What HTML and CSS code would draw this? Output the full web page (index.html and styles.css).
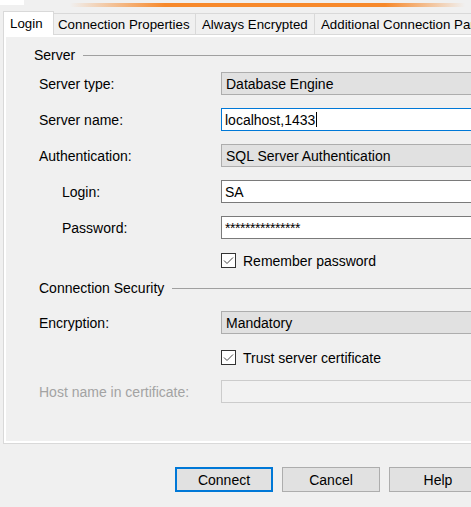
FILE: index.html
```html
<!DOCTYPE html>
<html>
<head>
<meta charset="utf-8">
<link rel="stylesheet" href="styles.css">
</head>
<body>
<div class="topbar"></div>
<div class="tabs">
  <div class="tab tab-login">Login</div>
  <div class="tab tab-cp">Connection Properties</div>
  <div class="tab tab-ae">Always Encrypted</div>
  <div class="tab tab-acp">Additional Connection Parameters</div>
</div>
<div class="panel">
  <div class="group-head group-server"><span>Server</span><span class="rule"></span></div>
  <div class="row row-first"><span class="lbl">Server type:</span><div class="field combo">Database Engine</div></div>
  <div class="row"><span class="lbl">Server name:</span><div class="field text focused">localhost,1433<span class="caret"></span></div></div>
  <div class="row"><span class="lbl">Authentication:</span><div class="field combo">SQL Server Authentication</div></div>
  <div class="row"><span class="lbl sub">Login:</span><div class="field text">SA</div></div>
  <div class="row"><span class="lbl sub">Password:</span><div class="field text stars">***************</div></div>
  <div class="row check-row row-remember">
    <svg class="cb" width="15" height="15" viewBox="0 0 15 15"><rect x="0.5" y="0.5" width="14" height="14" fill="#fff" stroke="#333"/><path d="M3 7.5 L6 10.5 L12 4.5" fill="none" stroke="#444" stroke-width="1"/></svg>
    <span>Remember password</span>
  </div>
  <div class="group-head group-sec"><span>Connection Security</span><span class="rule"></span></div>
  <div class="row row-enc"><span class="lbl">Encryption:</span><div class="field combo">Mandatory</div></div>
  <div class="row check-row row-trust">
    <svg class="cb" width="15" height="15" viewBox="0 0 15 15"><rect x="0.5" y="0.5" width="14" height="14" fill="#fff" stroke="#333"/><path d="M3 7.5 L6 10.5 L12 4.5" fill="none" stroke="#444" stroke-width="1"/></svg>
    <span>Trust server certificate</span>
  </div>
  <div class="row row-host"><span class="lbl disabled-lbl">Host name in certificate:</span><div class="field disabled"></div></div>
</div>
<div class="buttons">
  <div class="btn btn-default">Connect</div>
  <div class="btn">Cancel</div>
  <div class="btn">Help</div>
</div>
</body>
</html>
```
FILE: styles.css
```css
html, body {
  margin: 0;
  overflow: hidden;
}
body {
  width: 471px;
  height: 507px;
  background: #f0f0f0;
  font-family: "Liberation Sans", Arial, sans-serif;
  font-size: 14px;
  color: #000;
}
.topbar {
  height: 11px;
  background:
    linear-gradient(#fff, #fff) 0 0 / 24px 5px no-repeat,
    linear-gradient(to right, rgba(247,137,43,0) 70px, #f7892b 165px, #f7892b 385px, rgba(247,137,43,0) 465px) 0 3px / 100% 4px no-repeat;
}
.tabs {
  display: flex;
  align-items: flex-end;
  height: 23px;
  margin-left: 3px;
  white-space: nowrap;
}
.tab {
  box-sizing: border-box;
  flex: none;
  display: flex;
  align-items: center;
  height: 21px;
  padding-left: 6px;
  font-size: 13.3px;
  border-top: 1px solid #d9d9d9;
  border-right: 1px solid #d9d9d9;
  background: #f0f0f0;
  overflow: hidden;
}
.tab-login {
  position: relative;
  z-index: 2;
  width: 51px;
  height: 24px;
  margin-bottom: -1px;
  padding-left: 6px;
  padding-bottom: 1px;
  background: #fff;
  border-left: 1px solid #d9d9d9;
}
.tab-cp { width: 142px; padding-left: 4px; }
.tab-ae { width: 119px; padding-left: 6px; }
.tab-acp { width: 200px; padding-left: 6px; border-right: none; }

.panel {
  box-sizing: border-box;
  width: 540px;
  height: 410px;
  margin-left: 3px;
  border: 1px solid #d9d9d9;
  box-shadow: inset 0 0 0 2px #fff;
  padding: 12px 0 0 35px;
}
.group-head {
  display: flex;
  align-items: center;
  gap: 8px;
  height: 16px;
  white-space: nowrap;
}
.group-server { margin-left: -5px; }
.group-sec { margin-top: 8px; }
.rule {
  flex: 1;
  height: 0;
  border-top: 1px solid #a0a0a0;
}
.row {
  display: flex;
  align-items: center;
  height: 23px;
  margin-top: 13px;
  white-space: nowrap;
}
.row-first { margin-top: 9px; }
.row-remember { margin-top: 10px; }
.row-enc { margin-top: 15px; }
.row-trust { margin-top: 12px; }
.row-host { margin-top: 11px; }
.lbl {
  box-sizing: border-box;
  flex: none;
  width: 182px;
}
.lbl.sub { padding-left: 23px; }
.disabled-lbl { color: #a3a3a3; }
.field {
  box-sizing: border-box;
  flex: none;
  display: flex;
  align-items: center;
  width: 300px;
  height: 23px;
  padding-left: 4px;
  border: 1px solid #adadad;
  background: #e1e1e1;
}
.field.text {
  background: #fff;
  border-color: #7a7a7a;
  padding-left: 3px;
}
.field.focused { border-color: #0078d7; }
.field.stars { letter-spacing: -0.45px; }
.field.disabled {
  background: #f2f2f2;
  border-color: #cccccc;
}
.caret {
  display: inline-block;
  width: 1px;
  height: 15px;
  margin-left: 1px;
  background: #000;
}
.check-row {
  margin-left: 182px;
  gap: 7px;
}
.cb { flex: none; display: block; }

.buttons {
  display: flex;
  gap: 9px;
  margin: 23px 0 0 175px;
}
.btn {
  box-sizing: border-box;
  flex: none;
  display: flex;
  align-items: center;
  justify-content: center;
  width: 98px;
  height: 25px;
  border: 1px solid #adadad;
  background: #e1e1e1;
}
.btn-default { border: 2px solid #0078d7; }
```
